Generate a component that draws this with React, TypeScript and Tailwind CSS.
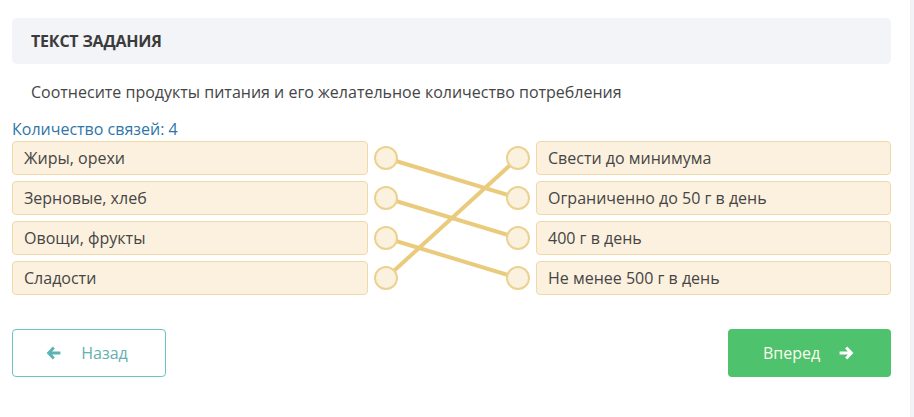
import React from "react";

const left = ["Жиры, орехи", "Зерновые, хлеб", "Овощи, фрукты", "Сладости"];
const right = ["Свести до минимума", "Ограниченно до 50 г в день", "400 г в день", "Не менее 500 г в день"];
const links: [number, number][] = [
  [0, 1],
  [1, 2],
  [2, 3],
  [3, 0],
];

function Item({ text }: { text: string }) {
  return (
    <div className="h-[34px] flex items-center px-[11px] bg-[#fcf1de] border border-[#f0d9a8] rounded-[4px] text-[16px] text-[#454545]">
      {text}
    </div>
  );
}

export default function App() {
  const cy = (i: number) => 17 + i * 40;
  return (
    <div className="flex w-[914px] h-[417px] bg-white" style={{ fontFamily: '"Open Sans", "Noto Sans", sans-serif' }}>
      <div className="flex-1 pl-[12px] pr-[19px] pt-[18px]">
        <div className="h-[46px] bg-[#f3f4f7] rounded-[5px] flex items-center pl-[19px]">
          <span className="text-[16px] font-bold text-[#3b3b3b] tracking-[-0.2px]">ТЕКСТ ЗАДАНИЯ</span>
        </div>
        <div className="pl-[19px] mt-[17px] text-[16px] text-[#454545] leading-[22px]">
          Соотнесите продукты питания и его желательное количество потребления
        </div>
        <div className="mt-[16px] text-[16px] text-[#2f76a8] leading-[20px]">Количество связей: 4</div>
        <div className="flex mt-[2px]">
          <div className="w-[356px] flex flex-col gap-[6px]">
            {left.map((t) => (
              <Item key={t} text={t} />
            ))}
          </div>
          <svg width="168" height="154" viewBox="0 0 168 154" className="shrink-0">
            {links.map(([a, b]) => (
              <line key={a} x1={18} y1={cy(a)} x2={150} y2={cy(b)} stroke="#eacb7e" strokeWidth={4} />
            ))}
            {[0, 1, 2, 3].map((i) => (
              <g key={i}>
                <circle cx={18} cy={cy(i)} r={11} fill="#fbf1df" stroke="#ecd290" strokeWidth={2} />
                <circle cx={150} cy={cy(i)} r={11} fill="#fbf1df" stroke="#ecd290" strokeWidth={2} />
              </g>
            ))}
          </svg>
          <div className="flex-1 flex flex-col gap-[6px]">
            {right.map((t) => (
              <Item key={t} text={t} />
            ))}
          </div>
        </div>
        <div className="flex justify-between mt-[34px]">
          <button className="w-[154px] h-[48px] border border-[#6cc3c3] rounded-[4px] flex items-center justify-center gap-[20px] text-[16px] text-[#63b0b0] pr-[4px]">
            <svg width="15" height="14" viewBox="0 0 15 14">
              <path d="M6.8 0.6 L0.6 7 L6.8 13.4 L8.8 11.4 L6.2 8.6 H14.4 V5.4 H6.2 L8.8 2.6 Z" fill="#5cb3b3" />
            </svg>
            <span>Назад</span>
          </button>
          <button className="w-[163px] h-[48px] bg-[#4ec26c] rounded-[4px] flex items-center justify-center gap-[19px] text-[16px] text-[#fdfdf0] pr-[2px]">
            <span>Вперед</span>
            <svg width="15" height="14" viewBox="0 0 15 14">
              <path d="M8.2 0.6 L14.4 7 L8.2 13.4 L6.2 11.4 L8.8 8.6 H0.6 V5.4 H8.8 L6.2 2.6 Z" fill="#ffffff" />
            </svg>
          </button>
        </div>
      </div>
      <div className="w-[4px] bg-[#f2f3f6]" />
    </div>
  );
}
